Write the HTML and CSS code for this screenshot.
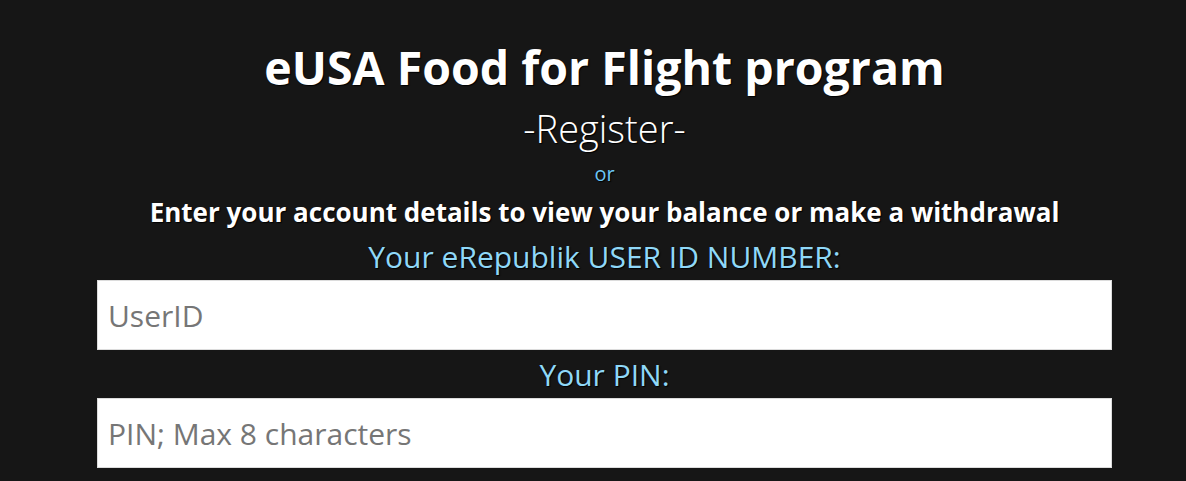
FILE: index.html
```html
<!DOCTYPE html>
<html>
<head>
<meta charset="utf-8">
<link rel="stylesheet" href="styles.css">
</head>
<body>
<main class="page">
  <h1 class="title">eUSA Food for Flight program</h1>
  <div class="register">-Register-</div>
  <div class="or">or</div>
  <h2 class="lead">Enter your account details to view your balance or make a withdrawal</h2>
  <label class="label" for="uid">Your eRepublik USER ID NUMBER:</label>
  <input class="field" id="uid" type="text" placeholder="UserID">
  <label class="label label-pin" for="pin">Your PIN:</label>
  <input class="field" id="pin" type="text" placeholder="PIN; Max 8 characters">
</main>
</body>
</html>
```
FILE: styles.css
```css
html, body {
  margin: 0;
  padding: 0;
  background: #161616;
  height: 100%;
  overflow: hidden;
}
body {
  font-family: "Open Sans", "Noto Sans", sans-serif;
  color: #ffffff;
}
.page {
  width: 1015px;
  margin-left: 97px;
  display: flex;
  flex-direction: column;
  align-items: center;
  padding-top: 39px;
  text-shadow: 1px 1px 1px #000;
}
.title {
  margin: 0;
  font-size: 46.5px;
  font-weight: 700;
  line-height: 56px;
}
.register {
  margin-top: 11px;
  font-size: 38px;
  font-weight: 300;
  line-height: 44px;
}
.or {
  margin-top: 12px;
  font-size: 20px;
  line-height: 24px;
  color: #6cc6f5;
}
.lead {
  margin: 10px 0 0;
  font-size: 26px;
  font-weight: 700;
  line-height: 32px;
}
.label {
  margin-top: 11px;
  font-size: 30px;
  font-weight: 400;
  line-height: 36px;
  color: #8fd8f8;
}
.label-pin {
  margin-top: 7px;
}
.field {
  box-sizing: border-box;
  width: 1015px;
  height: 70px;
  margin: 5px 0 0;
  padding: 0 10px;
  border: 1px solid #dcdcdc;
  background: #fff;
  font-family: "Open Sans", "Noto Sans", sans-serif;
  font-size: 30px;
  color: #333;
  outline: none;
}
.field::placeholder {
  color: #767676;
}
```
